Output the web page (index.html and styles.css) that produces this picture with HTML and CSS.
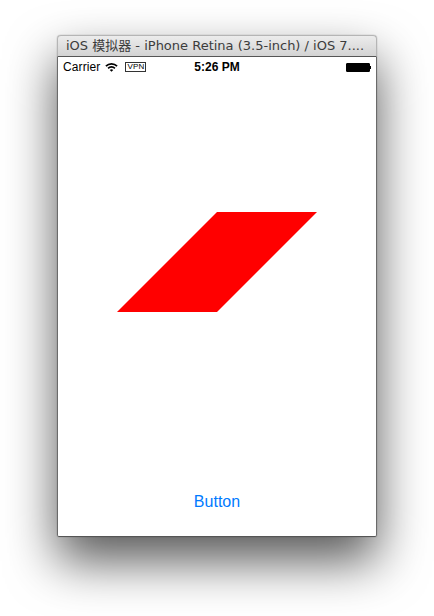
FILE: index.html
```html
<!DOCTYPE html>
<html>
<head>
<meta charset="utf-8">
<link rel="stylesheet" href="styles.css">
</head>
<body>
<div class="window">
  <div class="titlebar">iOS 模拟器 - iPhone Retina (3.5-inch) / iOS 7....</div>
  <div class="screen">
    <div class="status">
      <div class="left">
        <span class="carrier">Carrier</span>
        <svg class="wifi" width="13" height="10" viewBox="0 0 12 9">
          <path d="M0.3 3.2 A8 8 0 0 1 11.7 3.2 L10.6 4.3 A6.4 6.4 0 0 0 1.4 4.3 Z" fill="#000"/>
          <path d="M2.3 5.2 A5.2 5.2 0 0 1 9.7 5.2 L8.6 6.3 A3.6 3.6 0 0 0 3.4 6.3 Z" fill="#000"/>
          <path d="M4.4 7.3 A2.3 2.3 0 0 1 7.6 7.3 L6 8.9 Z" fill="#000"/>
        </svg>
        <span class="vpn">VPN</span>
      </div>
      <div class="time">5:26 PM</div>
      <div class="right">
        <span class="battery"><span class="cell"></span><span class="nub"></span></span>
      </div>
    </div>
    <div class="canvas">
      <svg class="shape" width="200" height="100" viewBox="0 0 200 100">
        <polygon points="100,0 200,0 100,100 0,100" fill="#ff0000"/>
      </svg>
    </div>
    <div class="button">Button</div>
  </div>
</div>
</body>
</html>
```
FILE: styles.css
```css
html, body {
  margin: 0;
  padding: 0;
  background: #ffffff;
}
body {
  width: 434px;
  height: 616px;
  overflow: hidden;
  display: flex;
  justify-content: center;
  align-items: flex-start;
  padding-top: 35px;
  box-sizing: border-box;
}
.window {
  width: 320px;
  display: flex;
  flex-direction: column;
  border-radius: 4px 4px 2px 2px;
  box-shadow: 0 24px 50px rgba(0,0,0,0.66), 0 0 1px rgba(0,0,0,0.5);
  background: #fff;
}
.titlebar {
  height: 22px;
  box-sizing: border-box;
  border: 1px solid #b5b5b5;
  border-bottom: 1px solid #555;
  border-radius: 4px 4px 0 0;
  background: linear-gradient(#ececec, #d3d3d3);
  font-family: "DejaVu Sans", "Noto Sans CJK SC", sans-serif;
  font-size: 13px;
  line-height: 20px;
  color: #3c3c3c;
  padding-left: 8px;
  white-space: nowrap;
  overflow: hidden;
}
.screen {
  height: 480px;
  box-sizing: border-box;
  border-left: 1px solid #6a6a6a;
  border-right: 1px solid #6a6a6a;
  border-bottom: 1px solid #555;
  border-radius: 0 0 2px 2px;
  background: #fff;
  display: flex;
  flex-direction: column;
}
.status {
  height: 20px;
  display: flex;
  align-items: center;
  justify-content: space-between;
  padding: 0 5px 0 5px;
  font-family: "Liberation Sans", Arial, sans-serif;
  font-size: 12px;
  color: #000;
  position: relative;
}
.left {
  display: flex;
  align-items: center;
  width: 100px;
}
.carrier {
  letter-spacing: 0.1px;
}
.wifi {
  margin-left: 5px;
}
.vpn {
  margin-left: 7px;
  font-size: 8px;
  line-height: 8px;
  border: 1px solid #333;
  padding: 0 1px;
  letter-spacing: 0.2px;
}
.time {
  font-weight: bold;
  font-size: 12px;
  position: absolute;
  left: 0;
  right: 0;
  text-align: center;
}
.right {
  display: flex;
  justify-content: flex-end;
  width: 60px;
}
.battery {
  display: flex;
  align-items: center;
}
.cell {
  width: 22px;
  height: 7px;
  background: #000;
  border: 1px solid #000;
  border-radius: 1px;
}
.nub {
  width: 1px;
  height: 3px;
  background: #000;
}
.canvas {
  height: 100px;
  margin-top: 135px;
  padding-left: 59px;
  display: flex;
}
.shape {
  display: block;
}
.button {
  margin-top: 181px;
  text-align: center;
  font-family: "Liberation Sans", Arial, sans-serif;
  font-size: 16px;
  color: #007aff;
  line-height: 18px;
}
```
